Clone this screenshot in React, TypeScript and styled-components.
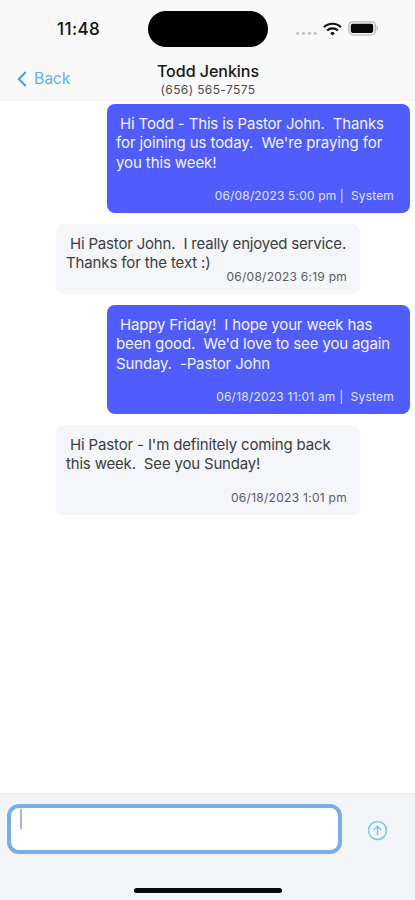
import React from 'react';
import styled, { createGlobalStyle } from 'styled-components';

const GlobalStyle = createGlobalStyle`
  * { box-sizing: border-box; }
  body { margin: 0; background: #fff; font-family: Inter, "Liberation Sans", sans-serif; }
`;

const Screen = styled.div`
  display: flex;
  flex-direction: column;
  width: 415px;
  height: 900px;
  background: #fff;
  overflow: hidden;
`;

const Header = styled.header`
  flex: none;
  height: 101px;
  background: #f9f9f9;
  border-bottom: 1px solid #f4f4f4;
`;

const StatusBar = styled.div`
  display: grid;
  grid-template-columns: 148px 120px 1fr;
  align-items: center;
  height: 58px;
`;

const Clock = styled.time`
  padding-left: 57px;
  font-size: 17px;
  font-weight: 550;
  line-height: 20px;
  letter-spacing: 0.4px;
  color: #111;
`;

const Island = styled.div`
  height: 36px;
  border-radius: 18px;
  background: #000;
`;

const StatusIcons = styled.div`
  display: flex;
  align-items: center;
  gap: 5.5px;
  height: 22px;
  padding: 0 0 1px 26.5px;
`;

const NavBar = styled.nav`
  display: grid;
  grid-template-columns: 100px 1fr 99px;
  height: 42px;
`;

const BackButton = styled.button`
  display: flex;
  align-items: center;
  gap: 7px;
  height: 42px;
  padding: 0 0 0 17px;
  border: 0;
  background: none;
  color: #5db4f2;
  font: 400 15.8px/20px Inter, sans-serif;
  letter-spacing: -0.2px;
`;

const Contact = styled.div`
  display: flex;
  flex-direction: column;
  align-items: center;
  padding-top: 3px;
`;

const ContactName = styled.h1`
  margin: 0;
  font-size: 16px;
  font-weight: 500;
  line-height: 20px;
  letter-spacing: -0.02px;
  color: #161616;
`;

const ContactNumber = styled.span`
  font-size: 12px;
  line-height: 17px;
  letter-spacing: 0.38px;
  color: #4c4c4c;
`;

const Thread = styled.main`
  flex: 1;
  display: flex;
  flex-direction: column;
  gap: 10.7px;
  padding: 3px 5px 0 56px;
`;

const Bubble = styled.article<{ $sent?: boolean; $height: number }>`
  display: flex;
  flex-direction: column;
  justify-content: space-between;
  align-self: ${(p) => (p.$sent ? 'flex-end' : 'flex-start')};
  width: ${(p) => (p.$sent ? 303.5 : 304)}px;
  height: ${(p) => p.$height}px;
  padding: 10px ${(p) => (p.$sent ? 16 : 13)}px 9px ${(p) => (p.$sent ? 9.5 : 10)}px;
  border-radius: 8px;
  background: ${(p) => (p.$sent ? '#505dfc' : '#f4f6fa')};
  color: ${(p) => (p.$sent ? '#f1f2ff' : '#3c3d3e')};
`;

const Line = styled.div<{ $spacing: number }>`
  height: 19.4px;
  font-size: 15px;
  line-height: 19.4px;
  letter-spacing: ${(p) => p.$spacing}px;
  white-space: pre;
`;

/* The negative margin lets a short last line share its row with the timestamp. */
const Meta = styled.footer<{ $sent?: boolean; $spacing: number }>`
  align-self: flex-end;
  margin-top: -6px;
  font-size: 12px;
  line-height: 17px;
  letter-spacing: ${(p) => p.$spacing}px;
  white-space: pre;
  color: ${(p) => (p.$sent ? '#dfe2ff' : '#5a5b5c')};
`;

const Composer = styled.footer`
  flex: none;
  display: flex;
  flex-direction: column;
  justify-content: space-between;
  height: 107px;
  padding: 10px 0 7px 7px;
  border-top: 1px solid #ebecef;
  background: #f3f5f9;
`;

const ComposeRow = styled.div`
  display: flex;
  align-items: center;
  gap: 25px;
`;

const Input = styled.div`
  width: 335px;
  height: 50px;
  padding: 1px 0 0 9px;
  border: 4px solid #79aee9;
  border-radius: 12px;
  background: #fff;
`;

const Caret = styled.div`
  width: 1.5px;
  height: 20px;
  background: #a6b4f6;
`;

const SendButton = styled.button`
  display: flex;
  padding: 0;
  margin-top: 3px;
  border: 0;
  background: none;
`;

const HomeIndicator = styled.div`
  width: 148px;
  height: 5px;
  margin-left: 127px;
  border-radius: 3px;
  background: #080a0a;
`;

type Text = [content: string, letterSpacing: number];

interface Message {
  sent?: boolean;
  height: number;
  lines: Text[];
  meta: Text;
}

const messages: Message[] = [
  {
    sent: true,
    height: 109.2,
    lines: [
      [' Hi Todd - This is Pastor John.  Thanks', -0.16],
      ["for joining us today.  We're praying for", -0.1],
      ['you this week!', -0.1],
    ],
    meta: ['06/08/2023 5:00 pm |  System', 0.15],
  },
  {
    height: 70.3,
    lines: [
      [' Hi Pastor John.  I really enjoyed service.', -0.19],
      ['Thanks for the text :)', -0.13],
    ],
    meta: ['06/08/2023 6:19 pm', 0.24],
  },
  {
    sent: true,
    height: 109.2,
    lines: [
      [' Happy Friday!  I hope your week has', -0.17],
      ["been good.  We'd love to see you again", -0.13],
      ['Sunday.  -Pastor John', -0.15],
    ],
    meta: ['06/18/2023 11:01 am |  System', 0.22],
  },
  {
    height: 90.2,
    lines: [
      [" Hi Pastor - I'm definitely coming back", -0.15],
      ['this week.  See you Sunday!', -0.18],
    ],
    meta: ['06/18/2023 1:01 pm', 0.28],
  },
];

const SignalDots = () => (
  <svg width="23" height="14" viewBox="0 0 23 14" fill="#c6c6c6">
    {[2.5, 8.5, 14.4, 20.2].map((x) => (
      <circle key={x} cx={x} cy="11.4" r="1.7" />
    ))}
  </svg>
);

const Wifi = () => (
  <svg width="19" height="14" viewBox="0 0 19 14" fill="none" stroke="#111" strokeWidth="2.1">
    <path d="M1 5.2 C5.7 .6 13.3 .6 18 5.2" />
    <path d="M4.1 8.5 C7.1 5.6 11.9 5.6 14.9 8.5" />
    <path d="M9.5 13.6 L7.3 11.5 C7.5 9.4 11.5 9.4 11.7 11.5 Z" fill="#111" stroke="none" />
  </svg>
);

const Battery = () => (
  <svg width="32" height="15" viewBox="0 0 32 15">
    <rect x="0.8" y="0.8" width="26.6" height="13" rx="4" fill="none" stroke="#b8b8b8" strokeWidth="1.3" />
    <rect x="2.8" y="2.7" width="22.4" height="9.2" rx="1.8" fill="#080808" />
    <path d="M28.6 4.6 q3 2.7 0 5.4z" fill="#b8b8b8" />
  </svg>
);

export default function App() {
  return (
    <Screen>
      <GlobalStyle />
      <Header>
        <StatusBar>
          <Clock>11:48</Clock>
          <Island />
          <StatusIcons>
            <SignalDots />
            <Wifi />
            <Battery />
          </StatusIcons>
        </StatusBar>
        <NavBar>
          <BackButton>
            <svg width="10" height="16" viewBox="0 0 10 16" fill="none" stroke="#379ff0" strokeWidth="1.8">
              <path d="M8.8 1 L1.8 8 L8.8 15" />
            </svg>
            Back
          </BackButton>
          <Contact>
            <ContactName>Todd Jenkins</ContactName>
            <ContactNumber>(656) 565-7575</ContactNumber>
          </Contact>
        </NavBar>
      </Header>
      <Thread>
        {messages.map((m) => (
          <Bubble key={m.meta[0]} $sent={m.sent} $height={m.height}>
            <div>
              {m.lines.map(([text, spacing]) => (
                <Line key={text} $spacing={spacing}>
                  {text}
                </Line>
              ))}
            </div>
            <Meta $sent={m.sent} $spacing={m.meta[1]}>
              {m.meta[0]}
            </Meta>
          </Bubble>
        ))}
      </Thread>
      <Composer>
        <ComposeRow>
          <Input>
            <Caret />
          </Input>
          <SendButton aria-label="Send">
            <svg width="21" height="21" viewBox="0 0 21 21" fill="none" stroke="#82c6ed" strokeWidth="1.5">
              <circle cx="10.5" cy="10.5" r="9" />
              <path d="M10.5 15.3 V6.3 M6.7 10 L10.5 6.2 L14.3 10" />
            </svg>
          </SendButton>
        </ComposeRow>
        <HomeIndicator />
      </Composer>
    </Screen>
  );
}
